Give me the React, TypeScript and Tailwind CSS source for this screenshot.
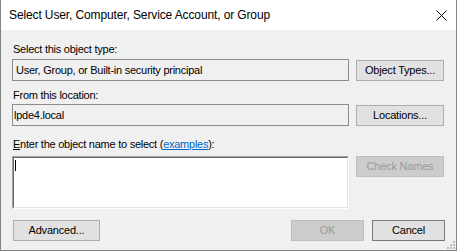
import React from "react";

const font = { fontFamily: '"Liberation Sans", Arial, sans-serif' };

function Btn({
  children,
  w,
  disabled,
  dark,
  className = "",
}: {
  children: React.ReactNode;
  w: string;
  disabled?: boolean;
  dark?: boolean;
  className?: string;
}) {
  const cls = disabled
    ? "bg-[#cccccc] border-[#bfbfbf] text-[#9a9a9a]"
    : dark
    ? "bg-[#e1e1e1] border-[#7a7a7a] text-black"
    : "bg-[#e1e1e1] border-[#adadad] text-black";
  return (
    <div
      className={`${w} h-[21px] border ${cls} flex items-center justify-center text-[11px] leading-[13px] tracking-[-0.2px] shrink-0 ${className}`}
    >
      {children}
    </div>
  );
}

export default function App() {
  return (
    <div
      style={font}
      className="relative w-[457px] h-[251px] border-x border-b border-[#838383] bg-[#f0f0f0] flex flex-col overflow-hidden"
    >
      <div className="h-[30px] bg-white flex items-center justify-between pl-[8px] pr-[9px] shrink-0">
        <span className="text-[12px] leading-[14px] tracking-[-0.12px] text-black">
          Select User, Computer, Service Account, or Group
        </span>
        <svg width="11" height="11" viewBox="0 0 11 11">
          <path d="M0.5 0.5 L10.5 10.5 M10.5 0.5 L0.5 10.5" stroke="#000" strokeWidth="1" />
        </svg>
      </div>
      <div className="flex flex-col px-[11px] text-[11px] tracking-[-0.25px] text-black">
        <div className="mt-[13px] h-[13px] leading-[13px] ml-[1px]">Select this object type:</div>
        <div className="mt-[3px] flex gap-[7px] items-start">
          <div className="w-[337px] h-[22px] border border-[#8c8c8c] bg-[#f0f0f0] flex items-center pl-[3px] leading-[13px]">
            User, Group, or Built-in security principal
          </div>
          <Btn w="w-[88px]" className="mt-[1px]">Object Types...</Btn>
        </div>
        <div className="mt-[8px] h-[13px] leading-[13px] ml-[1px]">From this location:</div>
        <div className="mt-[2px] flex gap-[7px] items-start">
          <div className="w-[337px] h-[22px] border border-[#8c8c8c] bg-[#f0f0f0] flex items-center pl-[1px] leading-[13px]">
            lpde4.local
          </div>
          <Btn w="w-[88px]" className="mt-[1px]">Locations...</Btn>
        </div>
        <div className="mt-[12px] h-[13px] leading-[13px] ml-[1px]">
          <span className="underline">E</span>nter the object name to select (
          <span className="text-[#0066cc] underline">examples</span>):
        </div>
        <div className="mt-[5px] flex gap-[7px] items-start">
          <div className="w-[337px] h-[53px] border border-t-[#a0a0a0] border-l-[#a0a0a0] border-b-white border-r-white">
            <div className="w-full h-full border border-t-[#696969] border-l-[#696969] border-b-[#e3e3e3] border-r-[#e3e3e3] bg-white pl-[1px] pt-[2px]">
              <div className="w-[1px] h-[11px] bg-black" />
            </div>
          </div>
          <Btn w="w-[88px]" disabled>Check Names</Btn>
        </div>
        <div className="mt-[11px] flex items-start">
          <Btn w="w-[87px]" className="ml-[1px]">Advanced...</Btn>
          <div className="flex-1" />
          <Btn w="w-[73px]" disabled>OK</Btn>
          <Btn w="w-[73px]" dark className="ml-[8px]">Cancel</Btn>
        </div>
      </div>
      <svg className="absolute right-[1px] bottom-[1px]" width="9" height="9" viewBox="0 0 9 9">
        <rect x="7" y="1" width="2" height="2" fill="#bcbcbc" />
        <rect x="4" y="4" width="2" height="2" fill="#bcbcbc" />
        <rect x="7" y="4" width="2" height="2" fill="#bcbcbc" />
        <rect x="1" y="7" width="2" height="2" fill="#bcbcbc" />
        <rect x="4" y="7" width="2" height="2" fill="#bcbcbc" />
        <rect x="7" y="7" width="2" height="2" fill="#bcbcbc" />
      </svg>
    </div>
  );
}
